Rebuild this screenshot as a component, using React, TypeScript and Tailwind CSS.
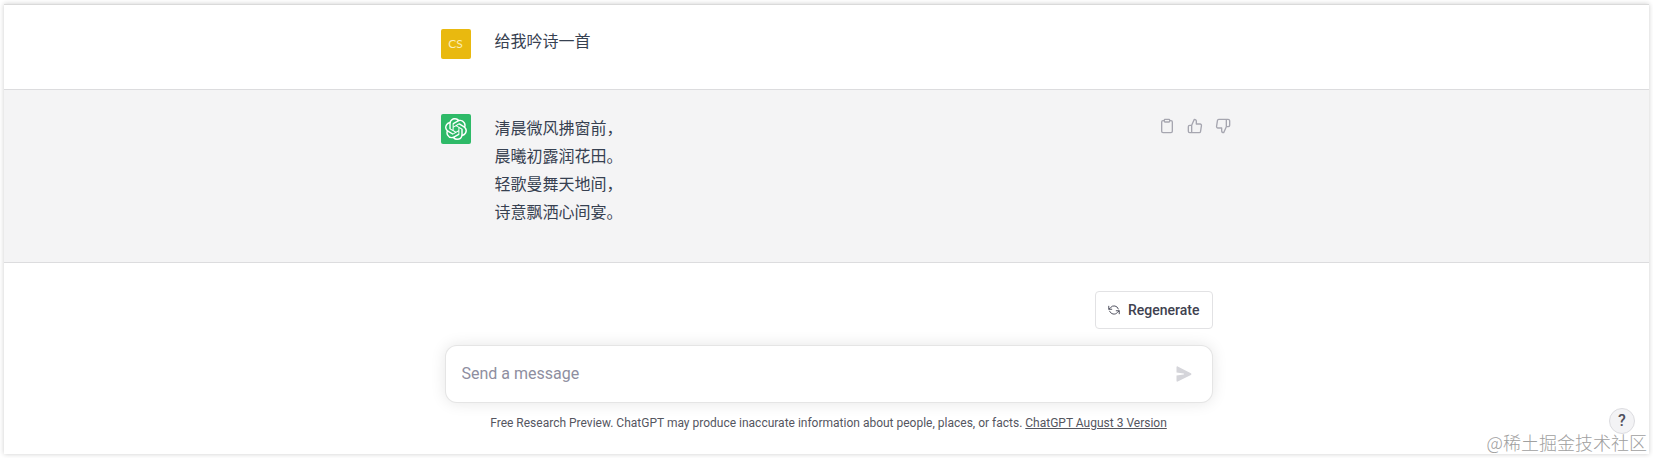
import type { ReactNode } from 'react'
import { FiClipboard, FiThumbsDown, FiThumbsUp } from 'react-icons/fi'

const poem = ['清晨微风拂窗前，', '晨曦初露润花田。', '轻歌曼舞天地间，', '诗意飘洒心间宴。']

function OpenAILogo() {
  return (
    <svg viewBox="0 0 24 24" fill="currentColor" className="w-[22px] h-[22px]" aria-hidden="true">
      <path d="M22.2819 9.8211a5.9847 5.9847 0 0 0-.5157-4.9108 6.0462 6.0462 0 0 0-6.5098-2.9A6.0651 6.0651 0 0 0 4.9807 4.1818a5.9847 5.9847 0 0 0-3.9977 2.9 6.0462 6.0462 0 0 0 .7427 7.0966 5.98 5.98 0 0 0 .511 4.9107 6.051 6.051 0 0 0 6.5146 2.9001A5.9847 5.9847 0 0 0 13.2599 24a6.0557 6.0557 0 0 0 5.7718-4.2058 5.9894 5.9894 0 0 0 3.9977-2.9001 6.0557 6.0557 0 0 0-.7475-7.0729zm-9.022 12.6081a4.4755 4.4755 0 0 1-2.8764-1.0408l.1419-.0804 4.7783-2.7582a.7948.7948 0 0 0 .3927-.6813v-6.7369l2.02 1.1686a.071.071 0 0 1 .038.052v5.5826a4.504 4.504 0 0 1-4.4945 4.4944zm-9.6607-4.1254a4.4708 4.4708 0 0 1-.5346-3.0137l.142.0852 4.783 2.7582a.7712.7712 0 0 0 .7806 0l5.8428-3.3685v2.3324a.0804.0804 0 0 1-.0332.0615L9.74 19.9502a4.4992 4.4992 0 0 1-6.1408-1.6464zM2.3408 7.8956a4.485 4.485 0 0 1 2.3655-1.9728V11.6a.7664.7664 0 0 0 .3879.6765l5.8144 3.3543-2.0201 1.1685a.0757.0757 0 0 1-.071 0l-4.8303-2.7865A4.504 4.504 0 0 1 2.3408 7.872zm16.5963 3.8558L13.1038 8.364 15.1192 7.2a.0757.0757 0 0 1 .071 0l4.8303 2.7913a4.4944 4.4944 0 0 1-.6765 8.1042v-5.6772a.79.79 0 0 0-.407-.667zm2.0107-3.0231l-.142-.0852-4.7735-2.7818a.7759.7759 0 0 0-.7854 0L9.409 9.2297V6.8974a.0662.0662 0 0 1 .0284-.0615l4.8303-2.7866a4.4992 4.4992 0 0 1 6.6802 4.66zM8.3065 12.863l-2.02-1.1638a.0804.0804 0 0 1-.038-.0567V6.0742a4.4992 4.4992 0 0 1 7.3757-3.4537l-.142.0805L8.704 5.459a.7948.7948 0 0 0-.3927.6813zm1.0976-2.3654l2.602-1.4998 2.6069 1.4998v2.9994l-2.5974 1.4997-2.6067-1.4997Z" />
    </svg>
  )
}

function RegenerateIcon() {
  return (
    <svg viewBox="0 0 16 16" fill="none" stroke="currentColor" strokeWidth="1.2" strokeLinecap="round" strokeLinejoin="round" className="w-3 h-3" aria-hidden="true">
      <path d="M1 3v4h4M15 13V9h-4" />
      <path d="M1.5 6.8 3.6 4.6A6 6 0 0 1 13.8 6.6M2.2 9.6a6 6 0 0 0 10.2 1.9l2.2-2.3" />
    </svg>
  )
}

function SendIcon() {
  return (
    <svg viewBox="0 0 16 16" fill="currentColor" className="w-4 h-4" aria-hidden="true">
      <path d="M.5 1.2C.5.5 1.1.1 1.7.4l13.2 6.8c.7.4.7 1.3 0 1.7L1.7 15.6c-.6.3-1.2-.1-1.2-.8V9.600L7.600 8.500C8.200 8.400 8.200 7.600 7.600 7.500L.5 6.400Z" />
    </svg>
  )
}

function IconButton({ label, children }: { label: string; children: ReactNode }) {
  return (
    <button type="button" aria-label={label} className="p-1 text-[#a6a6b0] rounded-md hover:text-gray-700">
      {children}
    </button>
  )
}

function Message({ avatar, actions, className, children }: { avatar: ReactNode; actions?: ReactNode; className: string; children: ReactNode }) {
  return (
    <div className={`border-b border-[#dcdcde] ${className}`}>
      <div className="flex items-start max-w-[816px] mx-auto pl-[22px]">
        {avatar}
        <div className="flex-1 ml-6 text-base leading-7 text-[#374151]">{children}</div>
        {actions}
      </div>
    </div>
  )
}

export default function App() {
  return (
    <div className="p-1 bg-white font-['Roboto','Noto_Sans_CJK_SC',sans-serif]">
      <main className="relative bg-white border-t border-[#dadada] shadow-[0_0_5px_rgba(0,0,0,0.2)]">
        <Message
          className="pt-6 pb-[30px]"
          avatar={<div className="flex items-center justify-center w-[30px] h-[30px] rounded-xs bg-[#e9b90f] text-[#faeeb8] text-xs font-['Lato',sans-serif]">CS</div>}
        >
          <p className="-mt-px">给我吟诗一首</p>
        </Message>

        <Message
          className="pt-6 pb-[35px] bg-[#f4f4f5]"
          avatar={<div className="flex items-center justify-center w-[30px] h-[30px] rounded-xs bg-[#2eba68] text-white"><OpenAILogo /></div>}
          actions={
            <div className="flex gap-1">
              <IconButton label="Copy"><FiClipboard className="w-4 h-4" /></IconButton>
              <IconButton label="Good response"><FiThumbsUp className="w-4 h-4" /></IconButton>
              <IconButton label="Bad response"><FiThumbsDown className="w-4 h-4" /></IconButton>
            </div>
          }
        >
          <div className="pt-px">
            {poem.map((line) => (
              <p key={line}>{line}</p>
            ))}
          </div>
        </Message>

        <form className="max-w-[772px] mx-auto pt-7 pl-1 pb-[23px]" onSubmit={(e) => e.preventDefault()}>
          <div className="flex justify-end">
            <button type="button" className="flex items-center gap-2 h-[38px] px-3 bg-white border border-[#e2e2e4] rounded text-sm font-medium text-[#40414f]">
              <RegenerateIcon />
              Regenerate
            </button>
          </div>
          <div className="flex items-center h-[58px] mt-4 pl-4 pr-5 bg-white border border-black/10 rounded-xl shadow-[0_0_15px_rgba(0,0,0,0.1)]">
            <input aria-label="Message" placeholder="Send a message" className="flex-1 text-base text-gray-800 outline-none placeholder:text-[#8e8ea0]" />
            <button type="submit" aria-label="Send" className="text-[#d5d5da]">
              <SendIcon />
            </button>
          </div>
          <p className="mt-3 text-xs text-center text-[#55565f]">
            Free Research Preview. ChatGPT may produce inaccurate information about people, places, or facts.{' '}
            <a href="#release-notes" className="underline">ChatGPT August 3 Version</a>
          </p>
        </form>

        <button type="button" aria-label="Help" className="absolute right-3.5 bottom-5 w-[26px] h-[26px] rounded-full border border-[#dcdce0] bg-[#f3f3f5] text-base font-medium leading-6 text-[#50505c]">
          ?
        </button>
        <span className="absolute right-0.5 bottom-0 text-lg leading-6 text-[#a0a0a0] font-['Noto_Sans_CJK_SC',sans-serif] font-light">@稀土掘金技术社区</span>
      </main>
    </div>
  )
}
